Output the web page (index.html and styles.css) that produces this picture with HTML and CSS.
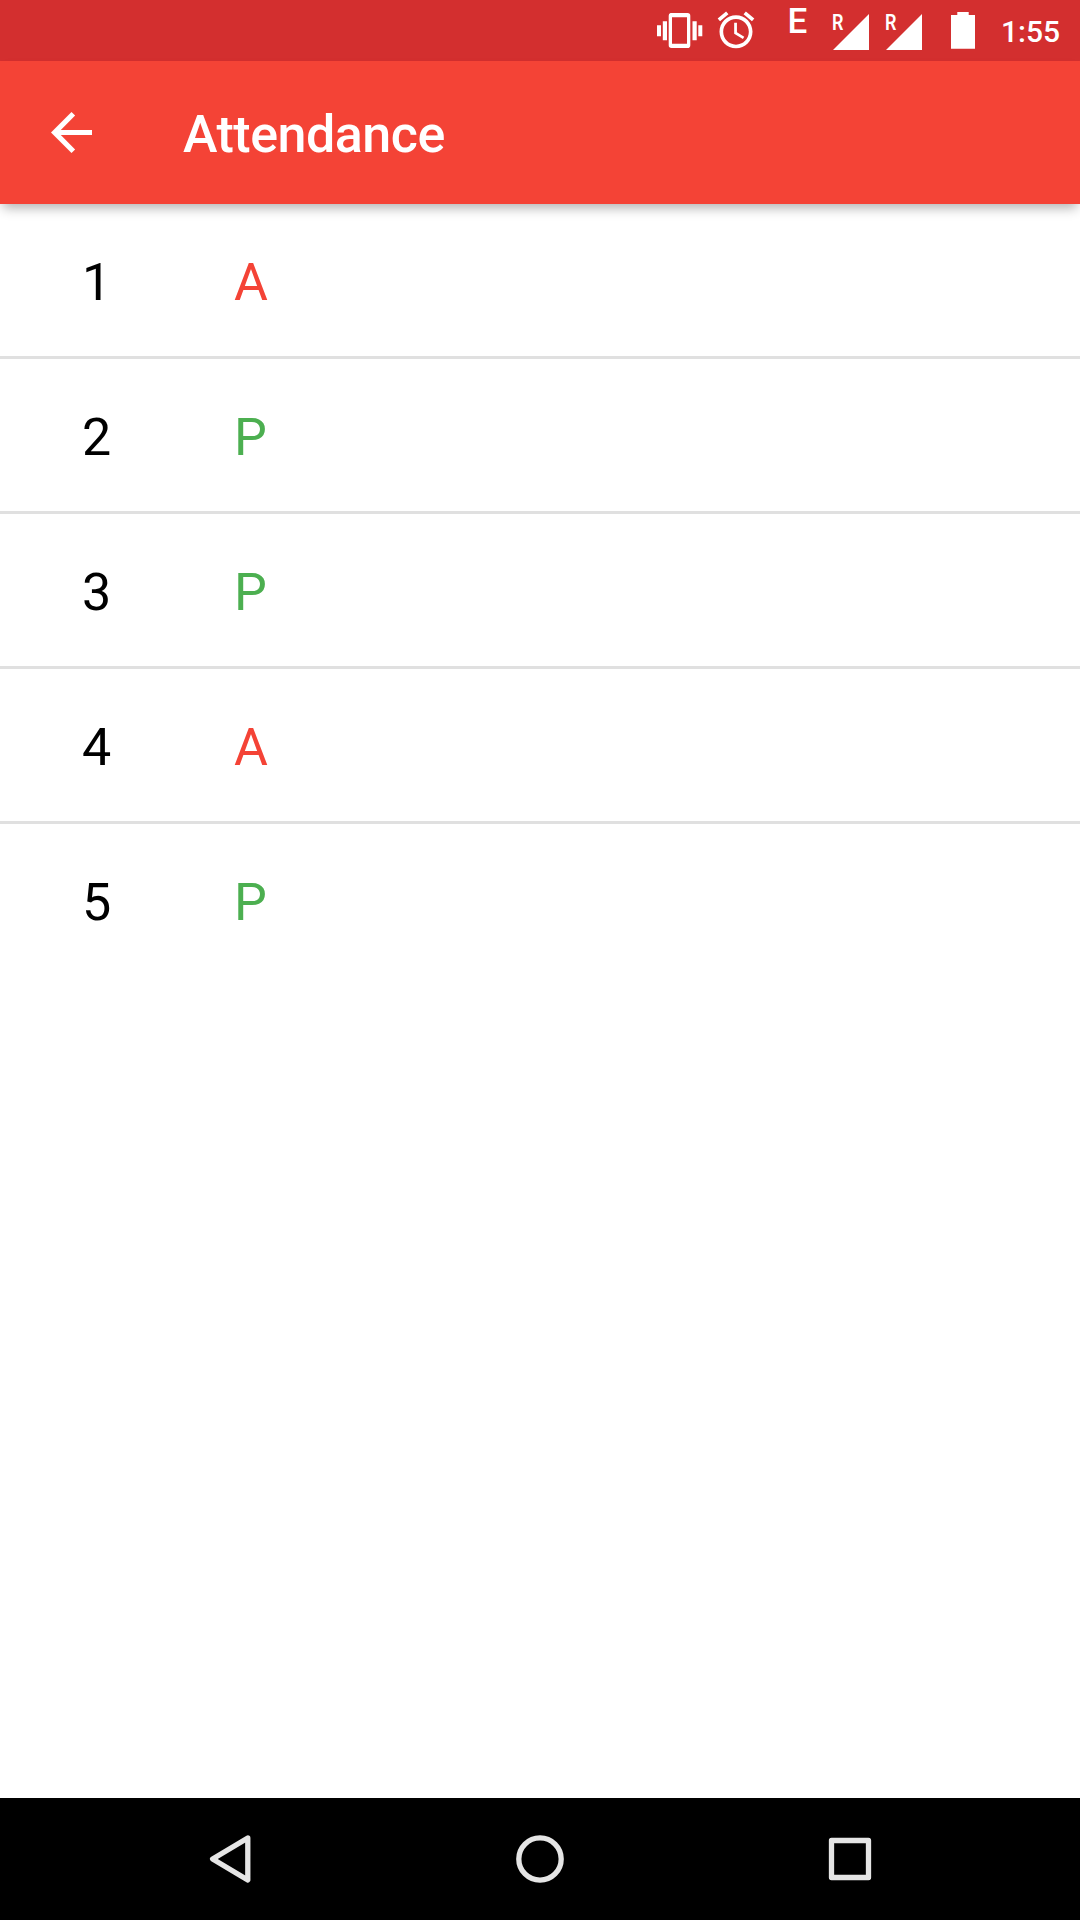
FILE: index.html
```html
<!DOCTYPE html>
<html lang="en">
<head>
<meta charset="utf-8">
<title>Attendance</title>
<link rel="stylesheet" href="styles.css">
</head>
<body>
<div class="screen">
  <div class="status">
    <svg class="vibrate" width="45" height="35" viewBox="0 0 45 35" fill="#fff">
      <path fill-rule="evenodd" d="M13.5 0h17a2.8 2.8 0 0 1 2.8 2.8v29.4a2.8 2.8 0 0 1-2.8 2.8h-16a2.8 2.8 0 0 1-2.8-2.8V2.8A2.8 2.8 0 0 1 13.500 0zM15 4.200v26.600h15V4.200z"/>
      <path d="M0 12.300h4v11H0zM5.800 8.300H10v19H5.800zM35.500 8.300h4.200v19h-4.200zM41.300 12.300h4v11h-4z"/>
    </svg>
    <svg class="alarm" width="44" height="44" viewBox="0 0 24 24" fill="#fff">
      <path d="M22 5.720l-4.600-3.860-1.290 1.530 4.600 3.860L22 5.720zM7.880 3.390L6.600 1.860 2 5.710l1.290 1.530 4.590-3.850zM12.500 8H11v6l4.750 2.850.75-1.230-3.990-2.370V8zM12 4c-4.970 0-9 4.030-9 9s4.020 9 9 9c4.970 0 9-4.030 9-9s-4.030-9-9-9zm0 16c-3.870 0-7-3.130-7-7s3.130-7 7-7 7 3.130 7 7-3.130 7-7 7z"/>
    </svg>
    <span class="edge">E</span>
    <svg class="signal" width="36" height="36" viewBox="0 0 36 36" fill="#fff">
      <path d="M36 0v36H0z"/>
      <text x="-1" y="16.300" textLength="11.500" lengthAdjust="spacingAndGlyphs">R</text>
    </svg>
    <svg class="signal second" width="36" height="36" viewBox="0 0 36 36" fill="#fff">
      <path d="M36 0v36H0z"/>
      <text x="-1" y="16.300" textLength="11.500" lengthAdjust="spacingAndGlyphs">R</text>
    </svg>
    <svg class="battery" width="24" height="37" viewBox="0 0 24 37" fill="#fff">
      <path d="M6.300 0h11.400v3H24v33.700H0V3h6.300z"/>
    </svg>
    <span class="clock">1:55</span>
  </div>
  <header class="appbar">
    <svg width="41" height="41" viewBox="4 4 16 16" fill="#fff">
      <path d="M20 11H7.830l5.590-5.590L12 4l-8 8 8 8 1.410-1.410L7.830 13H20v-2z"/>
    </svg>
    <h1 class="title">Attendance</h1>
  </header>
  <ul class="list">
    <li class="row"><span class="number">1</span><span class="absent">A</span></li>
    <li class="row"><span class="number">2</span><span class="present">P</span></li>
    <li class="row"><span class="number">3</span><span class="present">P</span></li>
    <li class="row"><span class="number">4</span><span class="absent">A</span></li>
    <li class="row"><span class="number">5</span><span class="present">P</span></li>
  </ul>
  <nav class="nav">
    <svg width="50" height="50" viewBox="0 0 50 50"><path d="M42.800 4L7.600 25l35.200 21z"/></svg>
    <svg width="50" height="50" viewBox="0 0 50 50"><circle cx="25" cy="25" r="21.200"/></svg>
    <svg width="50" height="50" viewBox="0 0 50 50"><rect x="6.500" y="6.500" width="37" height="37"/></svg>
  </nav>
</div>
</body>
</html>
```
FILE: styles.css
```css
* { box-sizing: border-box; }
body { margin: 0; font-family: Roboto, sans-serif; background: #fff; }
.screen { display: flex; flex-direction: column; height: 1920px; overflow: hidden; }
svg { display: block; flex: none; overflow: visible; }

.status {
  display: flex;
  align-items: flex-start;
  flex: none;
  height: 61px;
  padding-left: 657px;
  background: #d32f2f;
  color: #fff;
}
.vibrate { margin-top: 12.700px; }
.alarm { margin: 8.400px 0 0 12.200px; }
.edge { width: 24px; margin: 2px 0 0 29.300px; font-size: 35px; font-weight: 500; line-height: 39px; }
.signal { margin: 13.700px 0 0 21.200px; font-size: 21.500px; font-weight: 600; }
.second { margin-left: 17px; }
.battery { margin: 12px 0 0 29.300px; }
.clock { margin: 12px 0 0 26px; font-size: 30px; font-weight: 500; line-height: 40px; }

.appbar {
  position: relative;
  z-index: 1;
  display: flex;
  align-items: center;
  flex: none;
  height: 143px;
  padding-left: 51px;
  background: #f44336;
  color: #fff;
  box-shadow: 0 7px 11px -3px rgba(0, 0, 0, .3);
}
.title { margin: 5px 0 0 91px; font-size: 52px; font-weight: 500; line-height: 60px; letter-spacing: -.5px; }

.list { flex: 1; margin: 0; padding: 0; list-style: none; }
.row { display: flex; height: 155px; padding: 5px 0 0 82px; border-bottom: 3px solid #e0e0e0; font-size: 52px; line-height: 148px; }
.row:last-child { border-bottom: 0; }
.number { width: 152px; color: #000; }
.absent { color: #f44336; }
.present { color: #4caf50; }

.nav {
  display: flex;
  justify-content: center;
  align-items: center;
  gap: 260px;
  flex: none;
  height: 122px;
  background: #000;
  fill: none;
  stroke: #e5e5e5;
  stroke-width: 5.300px;
  stroke-linejoin: round;
}
```
